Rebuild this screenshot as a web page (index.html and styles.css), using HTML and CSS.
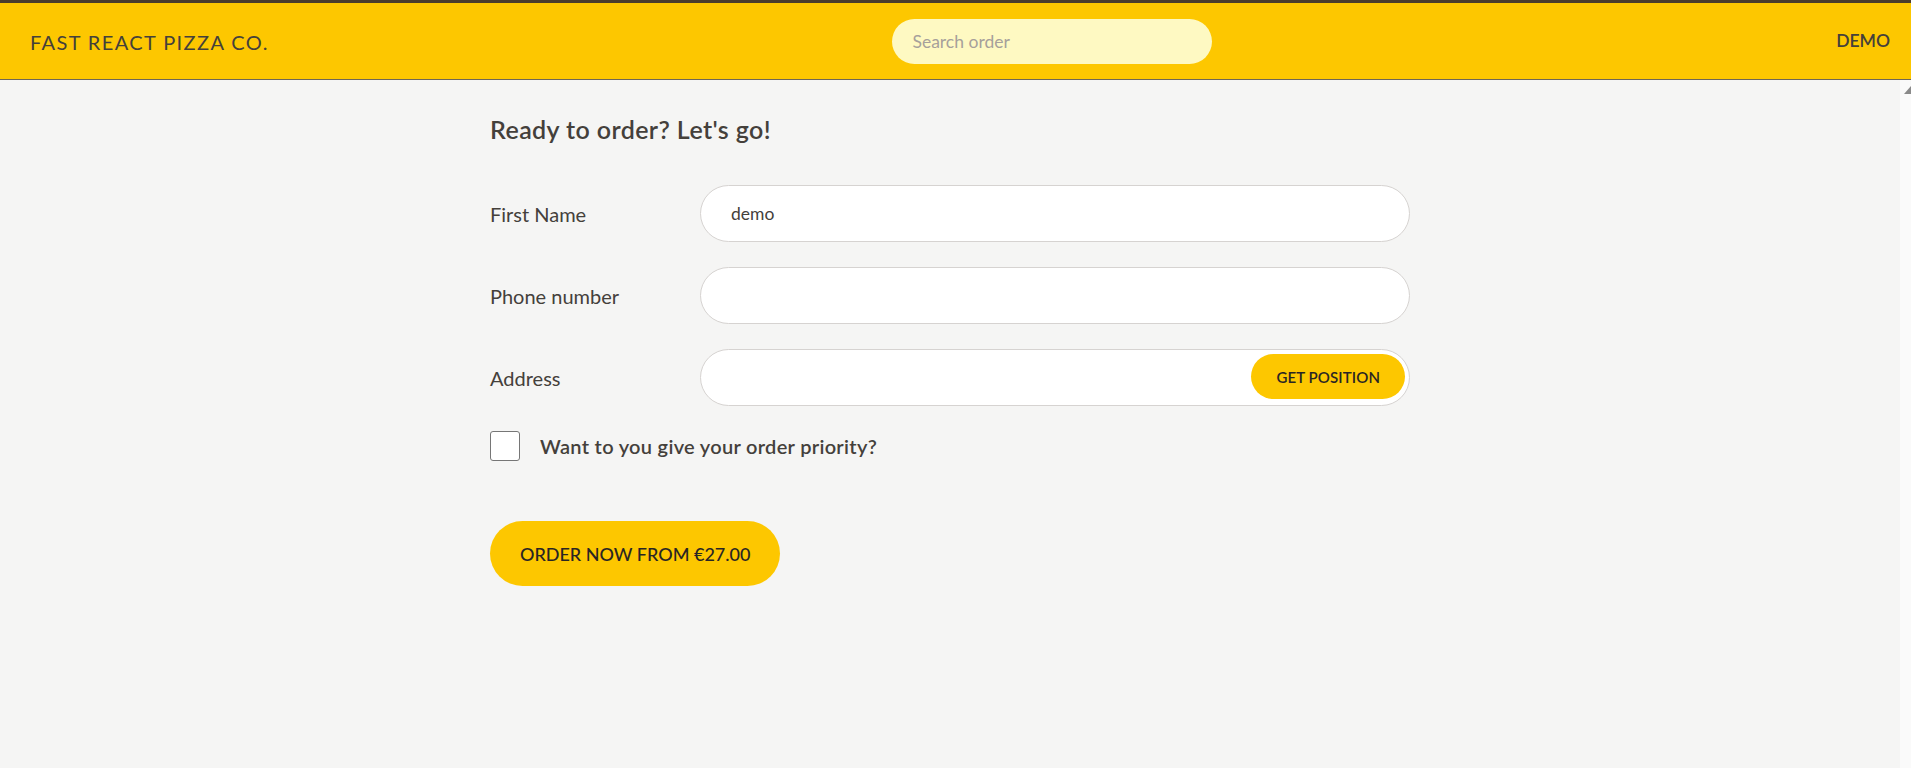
FILE: index.html
```html
<!DOCTYPE html>
<html lang="en">
<head>
<meta charset="utf-8">
<title>Fast React Pizza Co.</title>
<link rel="stylesheet" href="styles.css">
</head>
<body>
<div class="app">
  <div class="topline"></div>
  <header class="header">
    <a class="logo" href="#">Fast React Pizza Co.</a>
    <input class="search" type="text" placeholder="Search order">
    <div class="username">demo</div>
  </header>
  <div class="body-row">
    <main class="main">
      <div class="container">
        <h2 class="title">Ready to order? Let's go!</h2>
        <form class="form">
          <div class="row">
            <label class="label">First Name</label>
            <input class="input" type="text" value="demo">
          </div>
          <div class="row">
            <label class="label">Phone number</label>
            <input class="input" type="tel">
          </div>
          <div class="row">
            <label class="label">Address</label>
            <div class="address-wrap">
              <input class="input" type="text">
              <button type="button" class="btn-small">Get position</button>
            </div>
          </div>
          <div class="check-row">
            <span class="checkbox"></span>
            <label class="check-label">Want to you give your order priority?</label>
          </div>
          <button type="button" class="btn-primary">Order now from €27.00</button>
        </form>
      </div>
    </main>
    <div class="scrollbar"><span class="arrow"></span></div>
  </div>
</div>
</body>
</html>
```

FILE: styles.css
```css
* { box-sizing: border-box; }
html, body { margin: 0; padding: 0; }
body {
  font-family: Lato, "Open Sans", sans-serif;
  color: #44403b;
  background: #f5f5f4;
  font-size: 20px;
  line-height: 1.5;
}
.app {
  display: flex;
  flex-direction: column;
  height: 768px;
  overflow: hidden;
}
.topline {
  height: 3px;
  background: #4a3d2d;
}
.header {
  display: flex;
  align-items: center;
  justify-content: space-between;
  background: #fdc700;
  padding: 16px 21px 15px 30px;
  border-bottom: 1px solid #6e6656;
  text-transform: uppercase;
}
.logo {
  color: #44403b;
  text-decoration: none;
  letter-spacing: 1.4px;
  font-size: 20px;
  line-height: 30px;
}
.search {
  width: 320px;
  height: 45px;
  border: none;
  border-radius: 9999px;
  background: #fef9c2;
  padding: 0 20px;
  font-family: inherit;
  font-size: 17.5px;
  color: #44403b;
  outline: none;
}
.search::placeholder { color: #a6a09b; }
.username {
  font-weight: 600;
  font-size: 17.5px;
}
.body-row {
  flex: 1;
  display: flex;
}
.main {
  flex: 1;
}
.scrollbar {
  width: 11px;
  background: #fafafa;
  padding: 6px 0 0 4px;
}
.arrow {
  display: block;
  width: 0;
  height: 0;
  border-left: 7px solid transparent;
  border-right: 7px solid transparent;
  border-bottom: 8px solid #8a8a8a;
}
.container {
  max-width: 960px;
  margin: 0 auto;
  padding: 30px 20px;
}
.title {
  margin: 0 0 38px;
  padding-top: 2px;
  font-size: 25px;
  line-height: 35px;
  font-weight: 600;
  letter-spacing: 0.4px;
}
.form { margin: 0; }
.row {
  display: flex;
  align-items: center;
  gap: 10px;
  margin-bottom: 25px;
}
.label {
  flex: 0 0 200px;
  font-size: 20px;
}
.input {
  flex: 1;
  width: 100%;
  height: 57px;
  border: 1px solid #d6d3d1;
  border-radius: 9999px;
  background: #fff;
  padding: 0 30px;
  font-family: inherit;
  font-size: 17.5px;
  color: #44403b;
  outline: none;
}
.address-wrap {
  flex: 1;
  display: flex;
  position: relative;
}
.btn-small {
  position: absolute;
  right: 5px;
  top: 5px;
  height: 45px;
  padding: 0 25px;
  border: none;
  border-radius: 9999px;
  background: #fdc700;
  color: #292524;
  font-family: inherit;
  font-weight: 600;
  font-size: 15px;
  letter-spacing: 0.1px;
  text-transform: uppercase;
}
.check-row {
  display: flex;
  align-items: center;
  gap: 20px;
  margin-bottom: 60px;
}
.checkbox {
  width: 30px;
  height: 30px;
  border: 1px solid #767676;
  border-radius: 3px;
  background: #fff;
}
.check-label {
  font-weight: 600;
  font-size: 20px;
  line-height: 30px;
  letter-spacing: 0.3px;
}
.btn-primary {
  height: 65px;
  padding: 0 30px;
  border: none;
  border-radius: 9999px;
  background: #fdc700;
  color: #292524;
  font-family: inherit;
  font-weight: 500;
  font-size: 18px;
  letter-spacing: 0;
  text-transform: uppercase;
}
```
